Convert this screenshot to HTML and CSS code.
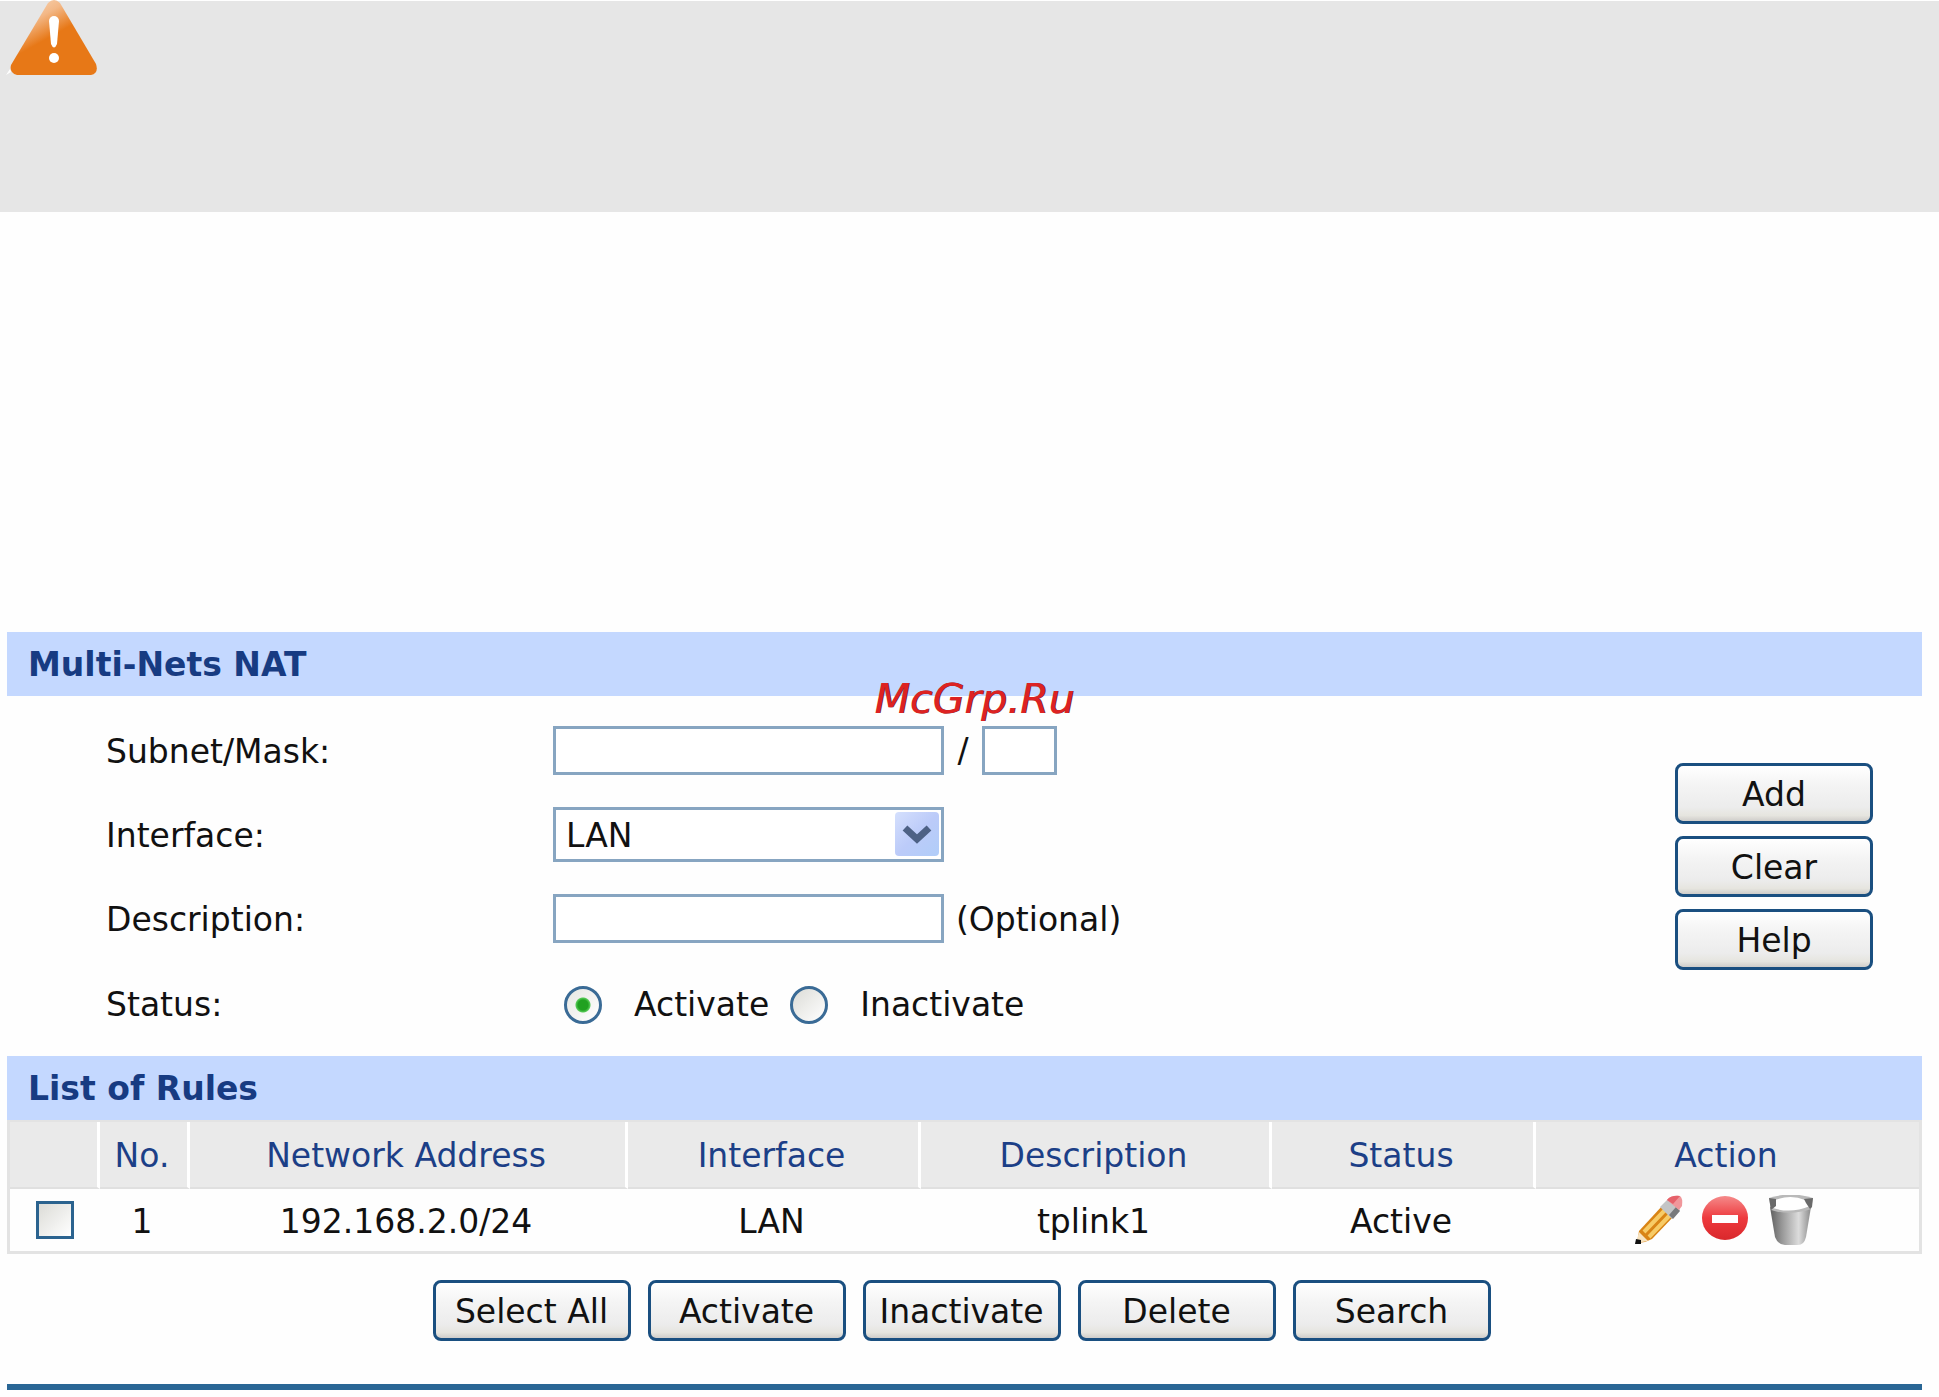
FILE: index.html
```html
<!DOCTYPE html>
<html lang="en">
<head>
<meta charset="utf-8">
<meta name="viewport" content="width=device-width, initial-scale=1">
<title>Multi-Nets NAT</title>
<link rel="stylesheet" href="styles.css">
</head>
<body>
<aside class="notice">
  <svg class="notice-icon" viewBox="0 0 92 75" role="img" aria-label="Warning">
    <defs>
      <linearGradient id="warn" gradientUnits="userSpaceOnUse" x1="26" y1="0" x2="46" y2="36">
        <stop offset="0" stop-color="#f8d2b0"/>
        <stop offset=".45" stop-color="#f3b887"/>
        <stop offset="1" stop-color="#e77817"/>
      </linearGradient>
    </defs>
    <path d="M0 75l4-6 1 3z" fill="#fff"/>
    <path d="M42 3Q48-3 54 3L90 64Q93 73 85 75H11Q3 73 5 65Z" fill="url(#warn)"/>
    <path d="M43 21a5 5 0 0 1 10 0L51 44q-3 7-6 0Z" fill="#fff"/>
    <circle cx="48" cy="58" r="5" fill="#fff"/>
  </svg>
</aside>

<main class="page">
  <form class="nat">
    <div class="band">
      <h2>Multi-Nets NAT</h2>
      <span class="mark">McGrp.Ru</span>
    </div>
    <div class="form-body">
      <div class="fields">
        <div class="field">
          <label class="name" for="subnet">Subnet/Mask:</label>
          <input class="box" id="subnet" type="text">
          <label class="slash" for="mask">/</label>
          <input class="box box-small" id="mask" type="text">
        </div>
        <div class="field">
          <label class="name" for="iface">Interface:</label>
          <span class="select-wrap">
            <select class="box select" id="iface"><option>LAN</option></select>
            <svg class="arrow" viewBox="0 0 44 44" aria-hidden="true">
              <defs>
                <linearGradient id="drop" x1="0" y1="0" x2="1" y2="1">
                  <stop offset="0" stop-color="#d5e0fd"/>
                  <stop offset=".5" stop-color="#bccbf9"/>
                  <stop offset="1" stop-color="#b0cdf9"/>
                </linearGradient>
              </defs>
              <rect width="44" height="44" rx="4" fill="url(#drop)"/>
              <path d="M10 16l12 11 12-11" fill="none" stroke="#4d6185" stroke-width="7"/>
            </svg>
          </span>
        </div>
        <div class="field">
          <label class="name" for="desc">Description:</label>
          <input class="box" id="desc" type="text">
          <span class="hint">(Optional)</span>
        </div>
        <div class="field field-status" role="radiogroup" aria-label="Status">
          <span class="name">Status:</span>
          <label class="choice"><input class="radio" type="radio" name="status" checked>Activate</label>
          <label class="choice"><input class="radio" type="radio" name="status">Inactivate</label>
        </div>
      </div>
      <div class="side-buttons">
        <button class="btn" type="button">Add</button>
        <button class="btn" type="reset">Clear</button>
        <button class="btn" type="button">Help</button>
      </div>
    </div>
  </form>

  <section>
    <div class="band"><h2>List of Rules</h2></div>
    <table class="rules">
      <colgroup>
        <col class="c-check"><col class="c-no"><col class="c-addr"><col class="c-iface"><col class="c-desc"><col class="c-status"><col>
      </colgroup>
      <thead>
        <tr>
          <th></th><th>No.</th><th>Network Address</th><th>Interface</th><th>Description</th><th>Status</th><th>Action</th>
        </tr>
      </thead>
      <tbody>
        <tr>
          <td class="pick"><input class="check" type="checkbox" aria-label="Select rule 1"></td>
          <td>1</td>
          <td>192.168.2.0/24</td>
          <td>LAN</td>
          <td>tplink1</td>
          <td>Active</td>
          <td class="tools">
            <div class="actions">
              <button class="icon" type="button" aria-label="Edit">
                <svg viewBox="0 0 48 50">
                  <path d="M2 48l2-12L28 10 40 20 17 44l-7 3Z" fill="#d98415"/>
                  <path d="M9 37L31 14M14 42L36 19" stroke="#f7cb66" stroke-width="4"/>
                  <path d="M1 48l3-11 9 9Z" fill="#f7e3c0"/>
                  <path d="M0 49l1-5 5 1v4Z" fill="#111"/>
                  <path d="M25 12l8-8 12 11-8 9Z" fill="#c3c5c6"/>
                  <path d="M34 20l7-8 4 4-7 8Z" fill="#77797b"/>
                  <path d="M32 5Q36 0 45 1q3 2 2 10l-3 4Z" fill="#f0979b"/>
                  <path d="M32 5Q36 0 45 1L38 9Z" fill="#e6616a"/>
                </svg>
              </button>
              <button class="icon" type="button" aria-label="Disable">
                <svg viewBox="0 0 48 50">
                  <defs>
                    <linearGradient id="stop" x1="0" y1="0" x2="0" y2="1">
                      <stop offset="0" stop-color="#f58a8a"/>
                      <stop offset=".5" stop-color="#ee3a3e"/>
                      <stop offset="1" stop-color="#d9282c"/>
                    </linearGradient>
                  </defs>
                  <ellipse cx="24" cy="23" rx="23" ry="22" fill="url(#stop)"/>
                  <path d="M11 20h26v8H11z" fill="#fff"/>
                </svg>
              </button>
              <button class="icon" type="button" aria-label="Delete">
                <svg viewBox="0 0 48 50">
                  <defs>
                    <linearGradient id="bin" x1="0" y1="0" x2="1" y2="0">
                      <stop offset="0" stop-color="#5f5f5f"/>
                      <stop offset=".3" stop-color="#999"/>
                      <stop offset=".7" stop-color="#dcdcdc"/>
                      <stop offset="1" stop-color="#8a8a8a"/>
                    </linearGradient>
                  </defs>
                  <path d="M3 12Q24 4 44 12L39 42Q37 50 31 50H18Q11 50 8 42Z" fill="url(#bin)"/>
                  <path d="M2 3Q24-4 46 3L44 14Q24 21 4 15Z" fill="#b9b9b9"/>
                  <path d="M8 5Q24-1 38 5l5 6Q24 19 6 13Z" fill="#fff"/>
                  <path d="M2 3l7 1v7l-5 4ZM46 3l-9 1 2 4 4 6 2-2Z" fill="#6a6a6a"/>
                </svg>
              </button>
            </div>
          </td>
        </tr>
      </tbody>
    </table>
    <div class="bottom-buttons">
      <button class="btn" type="button">Select All</button>
      <button class="btn" type="button">Activate</button>
      <button class="btn" type="button">Inactivate</button>
      <button class="btn" type="button">Delete</button>
      <button class="btn" type="button">Search</button>
    </div>
  </section>
</main>
</body>
</html>
```
FILE: styles.css
```css
* { box-sizing: border-box; }

body {
  margin: 0;
  background: #fefefe;
  color: #111;
  font: 33px/40px "DejaVu Sans", Verdana, sans-serif;
}

button, input, select { font: inherit; color: inherit; }

.notice {
  height: 212px;
  border-top: 1px solid #fff;
  background: #e6e6e6;
}

.notice-icon {
  display: block;
  width: 92px;
  height: 75px;
  margin: -1px 0 0 6px;
}

.page {
  margin: 420px 17px 0 7px;
  border-bottom: 6px solid #296695;
}

.band {
  position: relative;
  height: 64px;
  padding: 13px 21px 11px;
  background: #c4d8ff;
  color: #173b82;
}

.band h2 { margin: 0; font-size: 33px; line-height: 40px; }

.mark {
  position: absolute;
  left: 50%;
  top: 43px;
  transform: translateX(-50%);
  margin-left: 10px;
  color: #dd2222;
  font-size: 41px;
  line-height: 48px;
  font-style: oblique;
  text-shadow: 1px 0 0 #6a1c28;
}

.form-body {
  display: flex;
  align-items: flex-start;
  justify-content: space-between;
  padding: 12px 49px 12px 99px;
}

.field { display: flex; align-items: center; height: 84px; }

.field-status { padding-top: 6px; }

.name { width: 447px; padding-top: 4px; }

.field-status .name { padding-top: 0; }

.box {
  width: 391px;
  height: 49px;
  padding: 0 10px;
  border: 3px solid #87a5c1;
  border-radius: 0;
  background: #fff;
  outline: 0;
}

.box-small { width: 75px; }

.slash { width: 38px; padding-top: 2px; text-align: center; }

.hint { padding: 4px 0 0 12px; }

.select-wrap { position: relative; display: flex; }

.select { height: 55px; padding: 4px 10px 0; appearance: none; }

.arrow {
  position: absolute;
  right: 5px;
  top: 5px;
  width: 44px;
  height: 44px;
  pointer-events: none;
}

.choice { display: flex; align-items: center; gap: 32px; padding-left: 11px; margin-right: 10px; }

.radio, .check { appearance: none; width: 38px; height: 38px; margin: 0; }

.radio {
  border: 3px solid #3a6b96;
  border-radius: 50%;
  background: linear-gradient(135deg, #dcdcd7, #fff);
}

.radio:checked {
  background: radial-gradient(circle, #21a121 0 5px, #55c955 7px, transparent 8px), linear-gradient(135deg, #e6e6e2, #fff);
}

.check {
  display: block;
  margin: 0 auto;
  border: 3px solid #2b638f;
  background: linear-gradient(135deg, #dcdcd7, #fff);
}

.btn {
  width: 198px;
  height: 61px;
  padding: 2px 0 0;
  border: 3px solid #1a4f80;
  border-radius: 8px;
  background: linear-gradient(#fff, #f4f4f4 35%, #ececec 75%, #e6e5df 90%, #cfcdca);
}

.side-buttons { display: flex; flex-direction: column; gap: 12px; padding-top: 55px; }

.bottom-buttons {
  display: flex;
  justify-content: center;
  gap: 17px;
  padding: 26px 6px 43px 0;
}

.rules {
  width: 100%;
  table-layout: fixed;
  border-collapse: separate;
  border-spacing: 0;
  border: 3px solid #e3e3e3;
  border-top-width: 2px;
  text-align: center;
}

.c-check { width: 90px; }
.c-no { width: 90px; }
.c-addr { width: 438px; }
.c-iface { width: 293px; }
.c-desc { width: 351px; }
.c-status { width: 264px; }

.rules th, .rules td { padding: 2px 3px 0 0; }

.rules th {
  height: 67px;
  border-right: 3px solid #fff;
  border-bottom: 2px solid #e0e0e0;
  background: #eaeaea;
  color: #1c3f87;
  font-weight: 400;
}

.rules th:last-child { border-right: 0; }

.rules td { height: 62px; padding: 4px 6px 0 0; }

.rules .pick { padding: 0; }

.rules .tools { padding: 0 6px 0 0; }

.actions { display: flex; justify-content: center; gap: 18px; }

.icon { width: 48px; height: 50px; padding: 0; border: 0; background: none; }

.icon svg { display: block; width: 48px; height: 50px; }
```
